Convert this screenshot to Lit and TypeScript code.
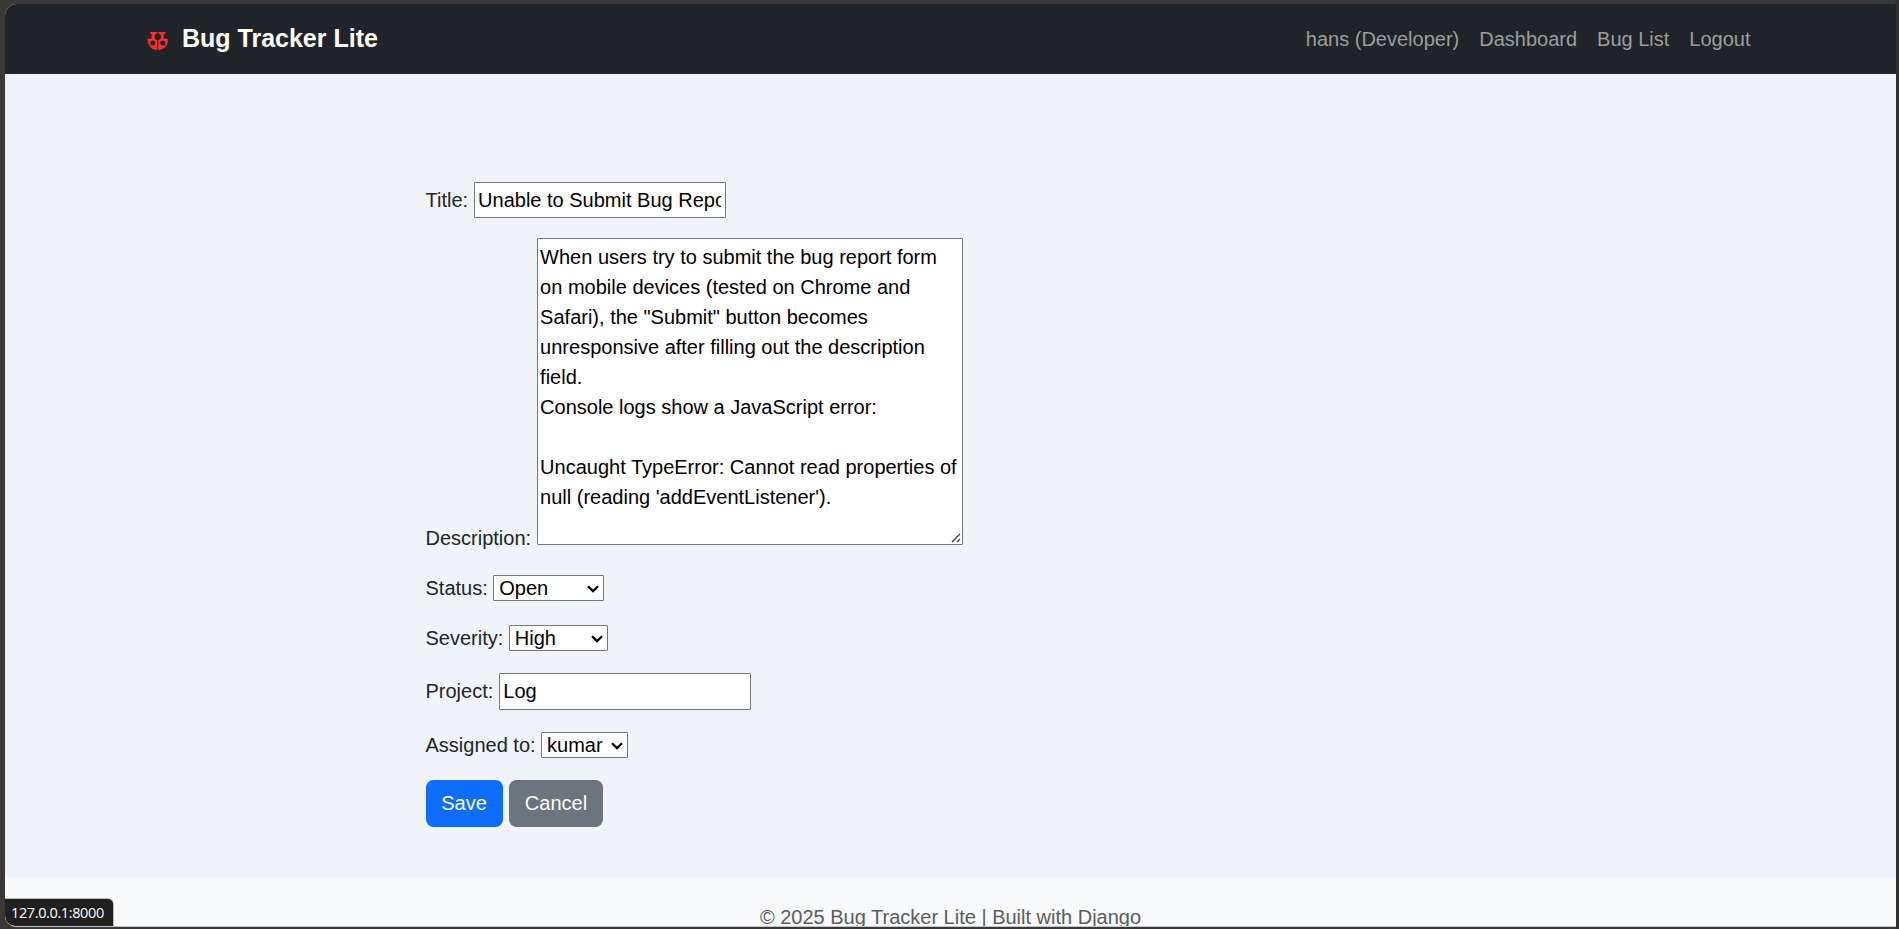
import { LitElement, html, css, svg } from "lit";
import { customElement, property } from "lit/decorators.js";

@customElement("select-box")
class SelectBox extends LitElement {
  @property() value = "";
  static styles = css`
    :host {
      display: flex;
      align-items: center;
      justify-content: space-between;
      box-sizing: border-box;
      height: 26px;
      padding: 0 4px 0 5px;
      background: #fff;
      border: 1px solid #767676;
      border-radius: 1px;
      color: #000;
      line-height: 24px;
    }
    svg { display: block; margin-top: 2px; }
  `;
  render() {
    return html`<span>${this.value}</span>
      <svg width="12" height="8" viewBox="0 0 12 8" fill="none" stroke="#000" stroke-width="2.2">
        <path d="M1 1.2 L6 6.1 L11 1.2" />
      </svg>`;
  }
}

@customElement("app-root")
class AppRoot extends LitElement {
  static styles = css`
    :host {
      display: block;
      box-sizing: border-box;
      width: 100%;
      height: 929px;
      padding: 4px 3px 2px 5px;
      overflow: hidden;
      position: relative;
      background: linear-gradient(90deg, #3a3938 0 1895px, #2e2e2e 1896px);
      font: 20px/30px "Liberation Sans", Arial, sans-serif;
      color: #212529;
    }
    .page {
      display: flex;
      flex-direction: column;
      height: 923px;
      box-sizing: border-box;
      border-bottom: 1px solid #c4c5c6;
      border-radius: 12px 0 0 12px;
      overflow: hidden;
      background: #f0f4f8;
    }
    .nav {
      display: flex;
      flex: none;
      align-items: center;
      justify-content: space-between;
      height: 70px;
      box-sizing: border-box;
      padding: 0 145.5px 0 142px;
      background: #212529;
    }
    .brand { display: flex; align-items: center; margin-top: -3px; color: #fff; font-size: 25px; font-weight: 700; line-height: 38px; }
    .bug { display: block; width: 22px; height: 22px; margin: 5px 13px 0 0; }
    .links { display: flex; gap: 20px; color: #9b9d9e; }
    .main { flex: none; height: 803px; box-sizing: border-box; padding: 108px 421px 0 420.5px; }
    .form { display: flex; flex-direction: column; gap: 20px; }
    .row { display: flex; align-items: center; gap: 5.5px; }
    .row.tall { align-items: flex-end; height: 315px; }
    .row.actions { gap: 6.5px; }
    .row.fixed { align-items: flex-start; }
    .row.fixed .label { padding-top: 3px; }
    .label { white-space: nowrap; }
    .input, .area {
      box-sizing: border-box;
      margin: 0;
      border: 1px solid #767676;
      border-radius: 1px;
      background: #fff;
      color: #000;
      font: inherit;
      outline: none;
    }
    .input { padding: 1px 3.5px; }
    .title { width: 252px; height: 36px; }
    .project { width: 252px; height: 37px; }
    .areawrap { position: relative; align-self: flex-start; width: 426px; height: 307px; }
    .area { display: block; width: 426px; height: 307px; padding: 2.5px; resize: none; overflow: hidden; white-space: pre-wrap; }
    .grip { position: absolute; right: 2px; bottom: 2px; }
    .status { width: 111px; }
    .severity { width: 99px; }
    .assigned { width: 87px; }
    .btn { box-sizing: border-box; height: 47px; border-radius: 7.5px; color: #fff; line-height: 46px; text-align: center; }
    .save { width: 77px; background: #0d6efd; }
    .cancel { width: 94px; background: #6c757d; }
    .footer { flex: 1; padding-top: 25px; background: #f8f9fa; color: #5a5d60; text-align: center; white-space: nowrap; }
    .tip {
      position: absolute;
      left: 5px;
      bottom: 3px;
      width: 108px;
      height: 27px;
      box-sizing: border-box;
      padding-left: 6px;
      border-radius: 0 5px 0 10px;
      background: #202020;
      color: #fff;
      font: 14.5px/27px "Open Sans", "Noto Sans", sans-serif;
      letter-spacing: -0.38px;
      white-space: nowrap;
      box-shadow: 0 0 0 1px #bcbdbe;
      clip-path: inset(-1px -1px 0 0 round 0 6px 0 10px);
    }
  `;

  private bug() {
    return svg`<svg class="bug" viewBox="0 0 22 22">
      <path fill="#f92f2f" d="M2.8 3 H18.6 C18.4 4.6 17.4 5.4 16.4 5.8 C16.8 7.4 17 8.6 17 9.8 H20.8 C21.4 16.4 17.2 21 10.8 21 C4.4 21 .2 16.4 .8 9.8 H4.4 C4.4 8.6 4.6 7.4 5 5.8 C4 5.4 3 4.6 2.8 3 Z" />
      <g fill="#212529">
        <circle cx="10.8" cy="7.7" r="3.2" />
        <rect x="10.3" y="2" width="1" height="20" />
        <circle cx="5.8" cy="14" r="2.5" />
        <circle cx="15.8" cy="14" r="2.5" />
      </g>
    </svg>`;
  }

  render() {
    const text = `When users try to submit the bug report form on mobile devices (tested on Chrome and Safari), the "Submit" button becomes unresponsive after filling out the description field.
Console logs show a JavaScript error:

Uncaught TypeError: Cannot read properties of null (reading 'addEventListener').`;
    return html`
      <div class="page">
        <nav class="nav">
          <div class="brand">${this.bug()}<span>Bug Tracker Lite</span></div>
          <div class="links">
            <span>hans (Developer)</span><span>Dashboard</span><span>Bug List</span><span>Logout</span>
          </div>
        </nav>
        <main class="main">
          <div class="form">
            <div class="row"><span class="label">Title:</span><input class="input title" .value=${"Unable to Submit Bug Report"} /></div>
            <div class="row tall">
              <span class="label">Description:</span>
              <div class="areawrap">
                <textarea class="area" spellcheck="false" .value=${text}></textarea>
                <svg class="grip" width="10" height="10" viewBox="0 0 10 10" stroke="#444" stroke-width="1.4">
                  <path d="M1 9 L9 1 M6 9 L9 6" />
                </svg>
              </div>
            </div>
            <div class="row"><span class="label">Status:</span><select-box class="status" value="Open"></select-box></div>
            <div class="row"><span class="label">Severity:</span><select-box class="severity" value="High"></select-box></div>
            <div class="row fixed"><span class="label">Project:</span><input class="input project" .value=${"Log"} /></div>
            <div class="row"><span class="label">Assigned to:</span><select-box class="assigned" value="kumar"></select-box></div>
            <div class="row actions"><div class="btn save">Save</div><div class="btn cancel">Cancel</div></div>
          </div>
        </main>
        <footer class="footer">© 2025 Bug Tracker Lite | Built with Django</footer>
      </div>
      <div class="tip">127.0.0.1:8000</div>
    `;
  }
}
